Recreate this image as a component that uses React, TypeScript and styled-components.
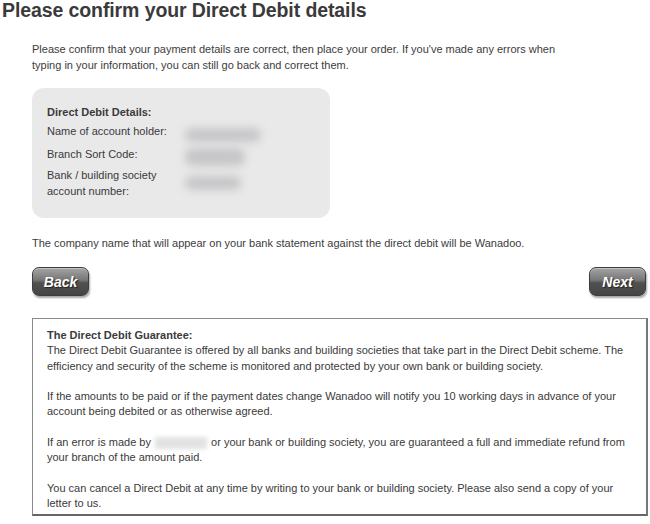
import React from "react";
import styled, { createGlobalStyle } from "styled-components";

const Global = createGlobalStyle`
  html, body { margin: 0; padding: 0; background: #ffffff; }
  body { font-family: "Liberation Sans", Arial, sans-serif; color: #333; }
`;

const Page = styled.div`
  width: 650px;
  height: 524px;
  overflow: hidden;
  display: flex;
  flex-direction: column;
`;

const Title = styled.h1`
  margin: 0;
  padding: 0 0 0 2px;
  font-family: "Liberation Sans", Arial, sans-serif;
  font-weight: bold;
  font-size: 19.5px;
  line-height: 20px;
  color: #3a3a3a;
  letter-spacing: -0.1px;
`;

const Content = styled.div`
  padding: 0 2px 0 32px;
  display: flex;
  flex-direction: column;
`;

const Para = styled.p<{ $top?: number; $width?: number }>`
  margin: ${(p) => p.$top ?? 0}px 0 0 0;
  font-size: 11px;
  line-height: 16px;
  color: #3c3c3c;
  max-width: ${(p) => p.$width ?? 600}px;
`;

const DetailsCard = styled.div`
  margin-top: 15px;
  width: 298px;
  height: 130px;
  box-sizing: border-box;
  background: #e9e9ea;
  border-radius: 12px;
  padding: 16px 0 0 15px;
  display: grid;
  grid-template-columns: 136px 1fr;
  align-content: start;
  column-gap: 0;
  font-size: 11px;
  color: #3a3a3a;
`;

const CardHeading = styled.div`
  grid-column: 1 / span 2;
  font-weight: bold;
  line-height: 16px;
  margin-bottom: 3px;
`;

const Label = styled.div<{ $gap?: number }>`
  line-height: 16px;
  margin-bottom: ${(p) => p.$gap ?? 7}px;
`;

const Value = styled.div<{ $w: number; $h?: number }>`
  display: flex;
  align-items: center;
  padding-left: 2px;
  & > span {
    display: block;
    width: ${(p) => p.$w}px;
    height: ${(p) => p.$h ?? 14}px;
    border-radius: 8px;
    background: #c6c6c8;
    filter: blur(4px);
  }
`;

const ButtonRow = styled.div`
  margin-top: 16px;
  display: flex;
  justify-content: space-between;
  padding-right: 2px;
`;

const NavButton = styled.button`
  width: 57px;
  height: 29px;
  border-radius: 7px;
  border: 1px solid #3e3e3e;
  background: linear-gradient(#a4a4a4 0%, #767676 45%, #505050 55%, #454545 100%);
  box-shadow: 1px 2px 2px rgba(0, 0, 0, 0.35), inset 0 1px 0 rgba(255, 255, 255, 0.35);
  color: #ffffff;
  font-family: "Liberation Sans", Arial, sans-serif;
  font-style: italic;
  font-weight: bold;
  font-size: 14px;
  text-shadow: 1px 1px 1px #222;
  padding: 0;
  cursor: pointer;
`;

const Guarantee = styled.div`
  margin-top: 22px;
  width: 616px;
  height: 198px;
  box-sizing: border-box;
  border: 1px solid #8a8a8a;
  border-right: 2px solid #777;
  border-bottom: 2px solid #666;
  padding: 9px 0 0 14px;
  font-size: 11px;
  line-height: 15.3px;
  color: #3a3a3a;
`;

const GPara = styled.p`
  margin: 0 0 15.3px 0;
`;

const GHeading = styled.span`
  font-weight: bold;
  display: block;
`;

const Redacted = styled.span`
  display: inline-block;
  width: 52px;
  height: 12px;
  vertical-align: middle;
  background: #e2e2e2;
  filter: blur(2px);
  margin: 0 1px;
`;

export default function App() {
  return (
    <Page>
      <Global />
      <Title>Please confirm your Direct Debit details</Title>
      <Content>
        <Para $top={21} $width={532}>
          Please confirm that your payment details are correct, then place your order. If you've made any errors when
          typing in your information, you can still go back and correct them.
        </Para>
        <DetailsCard>
          <CardHeading>Direct Debit Details:</CardHeading>
          <Label $gap={7}>Name of account holder:</Label>
          <Value $w={76}><span /></Value>
          <Label $gap={5}>Branch Sort Code:</Label>
          <Value $w={60} $h={18}><span /></Value>
          <Label $gap={0}>
            Bank / building society
            <br />
            account number:
          </Label>
          <Value $w={56}><span /></Value>
        </DetailsCard>
        <Para $top={17}>
          The company name that will appear on your bank statement against the direct debit will be Wanadoo.
        </Para>
        <ButtonRow>
          <NavButton>Back</NavButton>
          <NavButton>Next</NavButton>
        </ButtonRow>
        <Guarantee>
          <GPara>
            <GHeading>The Direct Debit Guarantee:</GHeading>
            The Direct Debit Guarantee is offered by all banks and building societies that take part in the Direct Debit scheme. The
            efficiency and security of the scheme is monitored and protected by your own bank or building society.
          </GPara>
          <GPara>
            If the amounts to be paid or if the payment dates change Wanadoo will notify you 10 working days in advance of your
            <br />
            account being debited or as otherwise agreed.
          </GPara>
          <GPara>
            If an error is made by <Redacted /> or your bank or building society, you are guaranteed a full and immediate refund from
            <br />
            your branch of the amount paid.
          </GPara>
          <GPara>
            You can cancel a Direct Debit at any time by writing to your bank or building society. Please also send a copy of your
            <br />
            letter to us.
          </GPara>
        </Guarantee>
      </Content>
    </Page>
  );
}
